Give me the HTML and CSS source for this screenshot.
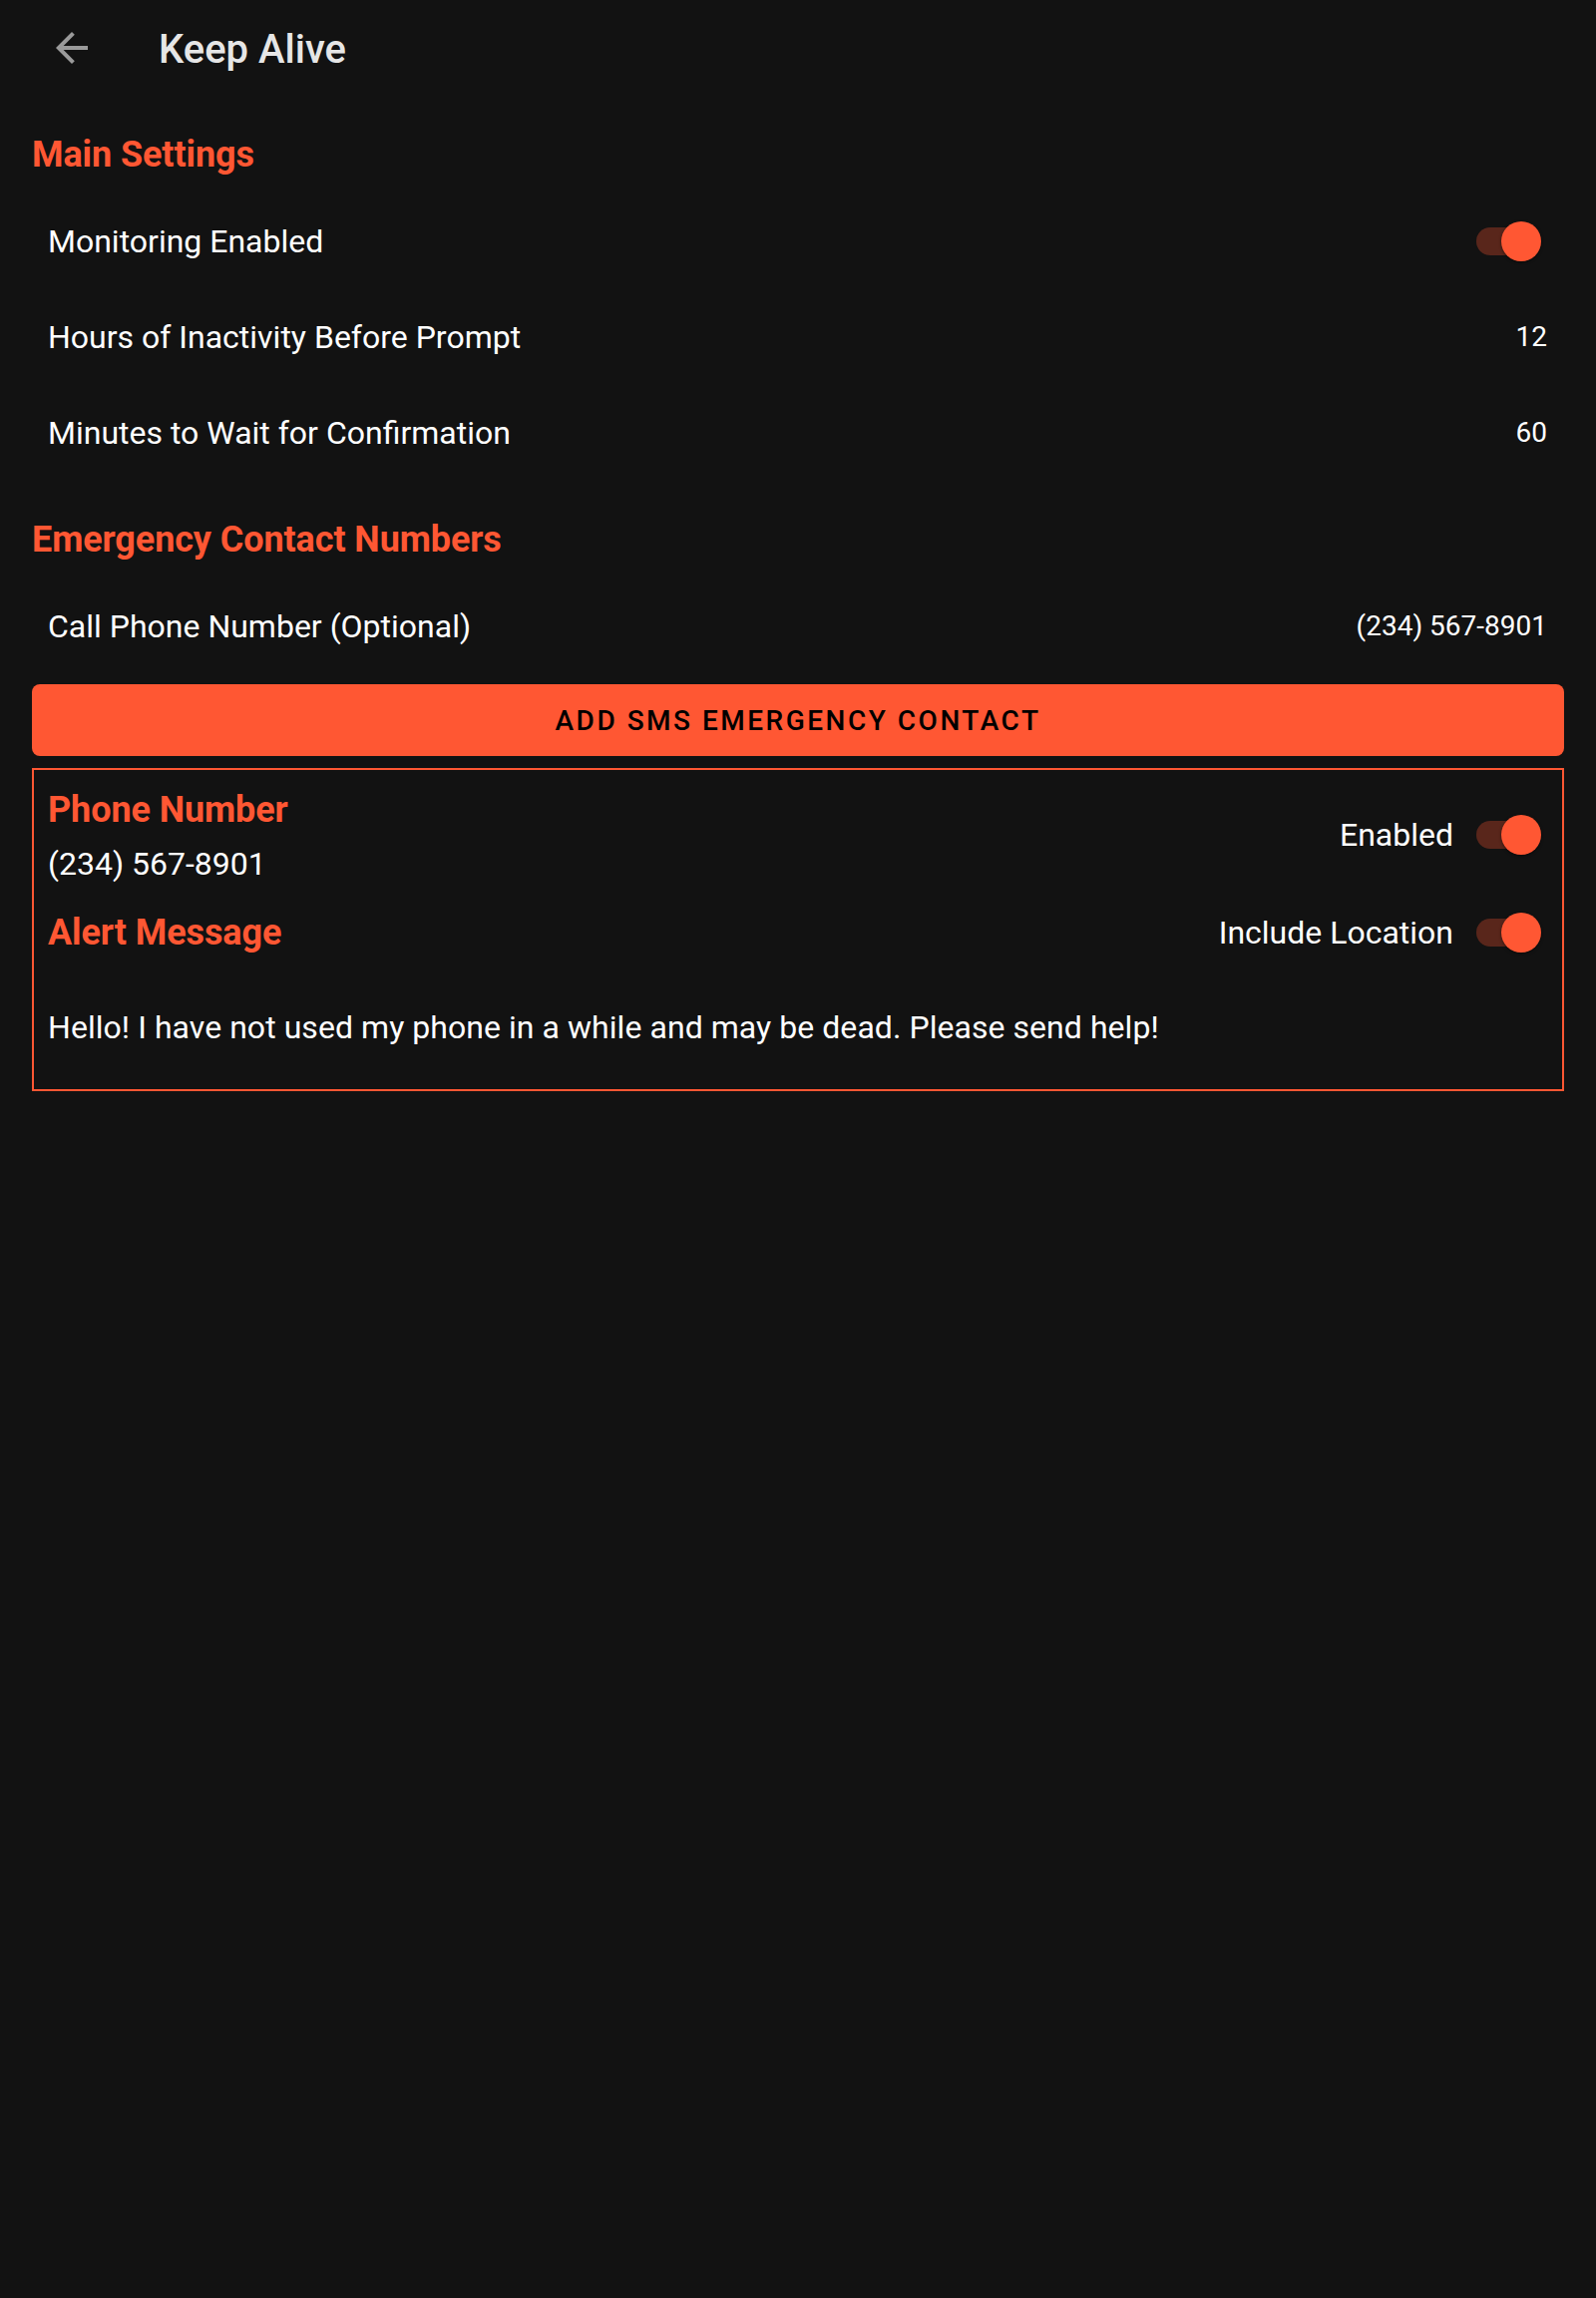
FILE: index.html
```html
<!DOCTYPE html>
<html lang="en">
<head>
<meta charset="utf-8">
<title>Keep Alive</title>
<link rel="stylesheet" href="styles.css">
</head>
<body>
<div class="app">
  <header class="toolbar">
    <span class="nav-icon" aria-label="Back">
      <svg viewBox="0 0 24 24" width="48" height="48"><path d="M20 11H7.83l5.59-5.59L12 4l-8 8 8 8 1.41-1.41L7.83 13H20v-2z" fill="currentColor"/></svg>
    </span>
    <h1 class="toolbar-title">Keep Alive</h1>
  </header>

  <main class="content">
    <h2 class="category">Main Settings</h2>
    <div class="pref-row">
      <span class="pref-label">Monitoring Enabled</span>
      <span class="switch on"></span>
    </div>
    <div class="pref-row">
      <span class="pref-label">Hours of Inactivity Before Prompt</span>
      <span class="pref-value">12</span>
    </div>
    <div class="pref-row">
      <span class="pref-label">Minutes to Wait for Confirmation</span>
      <span class="pref-value">60</span>
    </div>

    <h2 class="category">Emergency Contact Numbers</h2>
    <div class="pref-row">
      <span class="pref-label">Call Phone Number (Optional)</span>
      <span class="pref-value">(234) 567-8901</span>
    </div>

    <button class="add-btn" type="button">Add SMS Emergency Contact</button>

    <section class="contact-card">
      <div class="card-row">
        <div class="card-col">
          <div class="field-label">Phone Number</div>
          <div class="field-value">(234) 567-8901</div>
        </div>
        <div class="toggle-group">
          <span class="toggle-text">Enabled</span>
          <span class="switch on"></span>
        </div>
      </div>
      <div class="card-row alert-row">
        <div class="field-label">Alert Message</div>
        <div class="toggle-group">
          <span class="toggle-text">Include Location</span>
          <span class="switch on"></span>
        </div>
      </div>
      <p class="message">Hello! I have not used my phone in a while and may be dead. Please send help!</p>
    </section>
  </main>
</div>
</body>
</html>
```

FILE: styles.css
```css
html, body {
  margin: 0;
  padding: 0;
  background: #121212;
}

body {
  font-family: Roboto, "Noto Sans", "Liberation Sans", sans-serif;
  color: #ffffff;
  min-height: 2304px;
}

.app {
  background: #121212;
  min-height: 2304px;
}

.toolbar {
  display: flex;
  align-items: center;
  height: 96px;
  padding-left: 48px;
}

.nav-icon {
  display: flex;
  width: 48px;
  height: 48px;
  color: #9a9a9a;
}

.toolbar-title {
  margin: 4px 0 0 63px;
  font-size: 40px;
  font-weight: 500;
  line-height: 48px;
  color: #e6e6e6;
}

.content {
  padding: 0 32px;
}

.category {
  margin: 0;
  padding: 35px 0 15px;
  font-size: 36px;
  line-height: 48px;
  font-weight: 700;
  letter-spacing: -0.1px;
  color: #ff5733;
}

.pref-row {
  display: flex;
  align-items: center;
  justify-content: space-between;
  height: 96px;
  padding: 0 16px;
}

.pref-label {
  font-size: 32px;
  line-height: 38px;
}

.pref-value {
  font-size: 28px;
  line-height: 34px;
  margin-right: 1px;
}

.switch {
  position: relative;
  display: inline-block;
  width: 65px;
  height: 40px;
  margin-right: 7px;
  flex: none;
}

.switch::before {
  content: "";
  position: absolute;
  left: 0;
  top: 6px;
  width: 58px;
  height: 28px;
  border-radius: 14px;
  background: rgba(255, 87, 51, 0.3);
}

.switch::after {
  content: "";
  position: absolute;
  right: 0;
  top: 0;
  width: 40px;
  height: 40px;
  border-radius: 50%;
  background: #ff5733;
  box-shadow: 0 1px 3px rgba(0, 0, 0, 0.5);
}

.add-btn {
  display: block;
  width: 100%;
  height: 72px;
  margin: 10px 0 12px;
  border: 0;
  border-radius: 8px;
  background: #ff5733;
  color: #000;
  font-family: Roboto, "Noto Sans", "Liberation Sans", sans-serif;
  font-size: 28px;
  font-weight: 500;
  letter-spacing: 2.5px;
  text-transform: uppercase;
}

.contact-card {
  border: 2px solid #ff5733;
  padding: 16px 14px 43px;
}

.card-row {
  display: flex;
  align-items: center;
  justify-content: space-between;
}

.alert-row {
  height: 48px;
  margin-top: 26px;
}

.field-label {
  font-size: 36px;
  line-height: 48px;
  font-weight: 700;
  letter-spacing: -0.1px;
  color: #ff5733;
}

.field-value {
  margin-top: 11px;
  font-size: 32px;
  line-height: 38px;
}

.toggle-group {
  display: flex;
  align-items: center;
  gap: 23px;
}

.toggle-text {
  font-size: 32px;
  line-height: 38px;
}

.message {
  margin: 52px 0 0;
  font-size: 32px;
  line-height: 38px;
  letter-spacing: 0.05px;
}
```
